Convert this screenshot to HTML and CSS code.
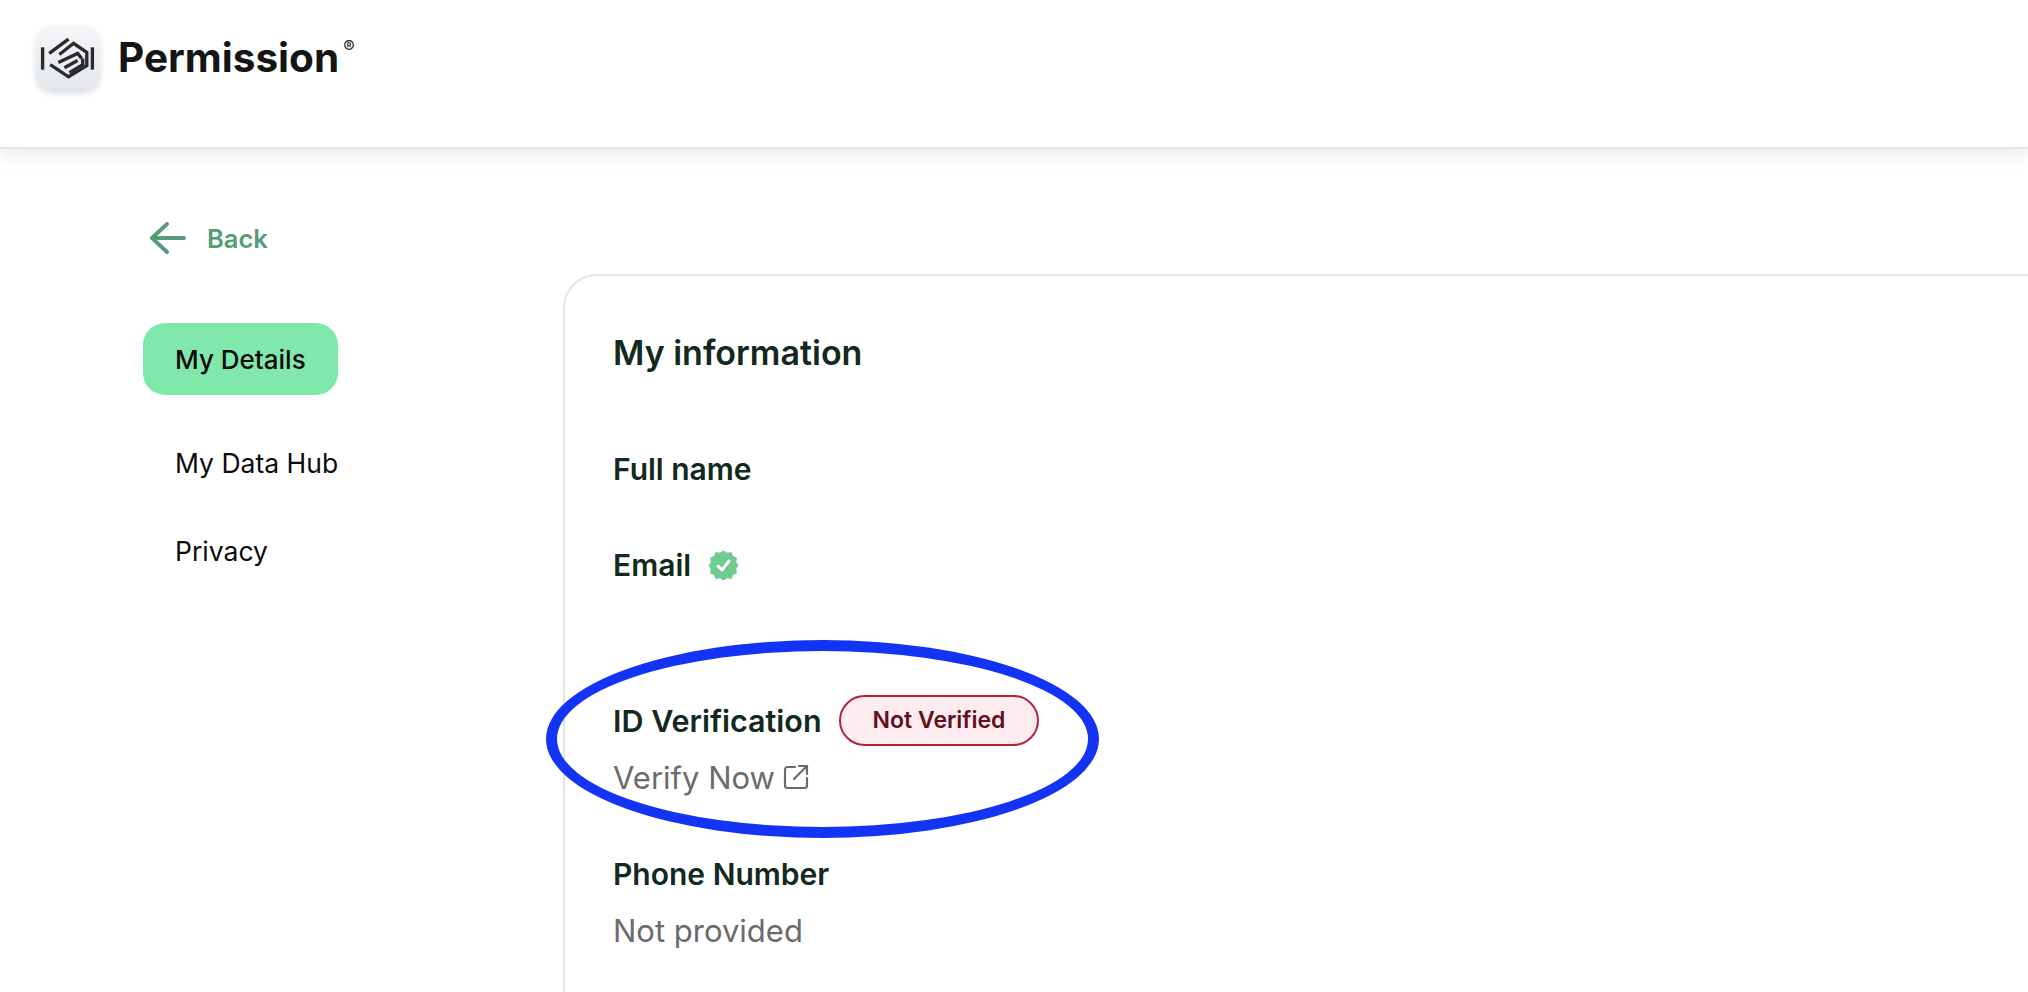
FILE: index.html
```html
<!DOCTYPE html>
<html lang="en">
<head>
    <meta charset="UTF-8">
    <meta name="viewport" content="width=device-width, initial-scale=1.0">
    <title>Permission</title>
    <link rel="stylesheet" href="styles.css">
</head>
<body>
    <header class="topbar">
        <div class="logo-box">
            <svg width="64" height="64" viewBox="0 0 63 63" fill="none" stroke="#2b2b2d" stroke-width="3.300">
                <path d="M6.500 21V43"/>
                <path d="M55.500 21V43"/>
                <path d="M13 27L32 13"/>
                <path d="M23 28L37 17L50 26V39L32 50L14 38"/>
                <path d="M22 36L41 27L45 32"/>
                <path d="M28 41L41 34"/>
                <path d="M33 46L46 38V32"/>
            </svg>
        </div>
        <span class="wordmark">Permission</span>
        <span class="reg">®</span>
    </header>

    <div class="page">
        <aside class="sidebar">
            <a class="back">
                <svg width="36" height="32" viewBox="0 0 36 32" fill="none" stroke="#559c78" stroke-width="3.800" stroke-linecap="round" stroke-linejoin="round">
                    <path d="M2 16H34"/>
                    <path d="M17 2L2 16L17 30"/>
                </svg>
                <span>Back</span>
            </a>
            <nav class="menu">
                <a class="menu-item active">My Details</a>
                <a class="menu-item">My Data Hub</a>
                <a class="menu-item">Privacy</a>
            </nav>
        </aside>

        <main class="card">
            <h2 class="card-title">My information</h2>

            <div class="info full-name">
                <div class="label">Full name</div>
            </div>

            <div class="info email">
                <div class="label">
                    Email
                    <svg width="31" height="31" viewBox="0 0 31 31">
                        <path fill="#6fcb8f" d="M15.500 0.500l3.600 2.300 4.200-.7 1.800 3.900 3.900 1.800-.7 4.200 2.300 3.500-2.300 3.600.7 4.200-3.900 1.800-1.800 3.900-4.200-.7-3.600 2.300-3.500-2.300-4.200.7-1.800-3.900-3.900-1.800.7-4.200L.5 15.500l2.300-3.500-.7-4.200 3.900-1.800 1.800-3.900 4.200.7z"/>
                        <path fill="none" stroke="#fff" stroke-width="3" stroke-linecap="round" stroke-linejoin="round" d="M10 16l4 4 7-9"/>
                    </svg>
                </div>
            </div>

            <div class="info id-check">
                <div class="label">
                    ID Verification
                    <span class="badge">Not Verified</span>
                </div>
                <a class="verify">
                    Verify Now
                    <svg width="26" height="26" viewBox="0 0 26 26" fill="none" stroke="#6b6b6b" stroke-width="2.200" stroke-linecap="round" stroke-linejoin="round">
                        <path d="M12 3H4.500A2.500 2.500 0 0 0 2 5.500V21.500A2.500 2.500 0 0 0 4.500 24H21.500A2.500 2.500 0 0 0 24 21.500V14"/>
                        <path d="M11 15L24 2"/>
                        <path d="M16 2H24V10"/>
                    </svg>
                </a>
            </div>

            <div class="info phone">
                <div class="label">Phone Number</div>
                <div class="value">Not provided</div>
            </div>
        </main>
    </div>

    <!-- marca azul em volta da verificação -->
    <div class="highlight"></div>
</body>
</html>
```

FILE: styles.css
```css
body {
    font-family: "Inter", "Liberation Sans", sans-serif;
    margin: 0;
    height: 992px;
    overflow: hidden;
    background-color: #ffffff;
    position: relative;
}

.topbar {
    display: flex;
    align-items: flex-start;
    height: 149px;
    padding: 26px 0 0 36px;
    box-sizing: border-box;
    background-color: #ffffff;
    border-bottom: 2px solid #e6e6e6;
    box-shadow: 0 4px 20px rgba(0, 0, 0, 0.1);
}

.logo-box {
    width: 64px;
    height: 64px;
    border-radius: 16px;
    background: linear-gradient(180deg, #f5f6f8, #e3e7eb);
    box-shadow: 0 3px 6px rgba(0, 0, 0, 0.14);
}

.wordmark {
    margin: 6px 0 0 18px;
    font-size: 40.500px;
    line-height: 52px;
    font-weight: 700;
    color: #151515;
}

.reg {
    margin: 12px 0 0 4px;
    font-size: 17px;
    line-height: 18px;
    color: #222222;
}

.page {
    display: flex;
    height: 843px;
    padding-left: 143px;
}

.sidebar {
    width: 420px;
    flex-shrink: 0;
}

.back {
    display: flex;
    align-items: center;
    gap: 21px;
    height: 32px;
    margin: 73px 0 0 7px;
    font-size: 25.500px;
    font-weight: 600;
    color: #559c78;
}

.menu {
    display: flex;
    flex-direction: column;
    align-items: flex-start;
    margin-top: 69px;
}

.menu-item {
    padding: 0 32px;
    height: 72px;
    line-height: 72px;
    font-size: 26.500px;
    color: #0b0b0b;
    margin-bottom: 16px;
}

.menu-item.active {
    background-color: #80e8aa;
    border-radius: 22px;
    margin-bottom: 32px;
    line-height: 74px;
    font-weight: 500;
    font-size: 26px;
}

.card {
    flex: 1;
    margin: 125px -60px -60px 0;
    padding: 55px 48px 0 48px;
    border: 2px solid #e4e4e4;
    border-radius: 34px;
    color: #13291e;
}

.card-title {
    margin: 0;
    font-size: 34px;
    line-height: 44px;
    font-weight: 600;
}

.info {
    margin-top: 76px;
}

.label {
    display: flex;
    align-items: center;
    gap: 17px;
    height: 36px;
    font-size: 30px;
    font-weight: 600;
}

.email {
    margin-top: 60px;
}

.id-check {
    margin-top: 119px;
}

.id-check .label {
    font-size: 30.500px;
}

.badge {
    display: inline-block;
    height: 51px;
    line-height: 47px;
    box-sizing: border-box;
    padding: 0 32px;
    border: 2px solid #b4233c;
    border-radius: 26px;
    background-color: #fcecef;
    color: #620f1e;
    font-size: 23px;
    font-weight: 600;
}

.verify,
.value {
    display: flex;
    align-items: center;
    gap: 8px;
    margin-top: 21px;
    height: 36px;
    font-size: 31px;
    color: #6b6b6b;
}

.value {
    margin-top: 20px;
}

.phone {
    margin-top: 61px;
}

.highlight {
    position: absolute;
    left: 546px;
    top: 640px;
    width: 553px;
    height: 198px;
    box-sizing: border-box;
    border: 11px solid #1434f5;
    border-radius: 50%;
}
```
